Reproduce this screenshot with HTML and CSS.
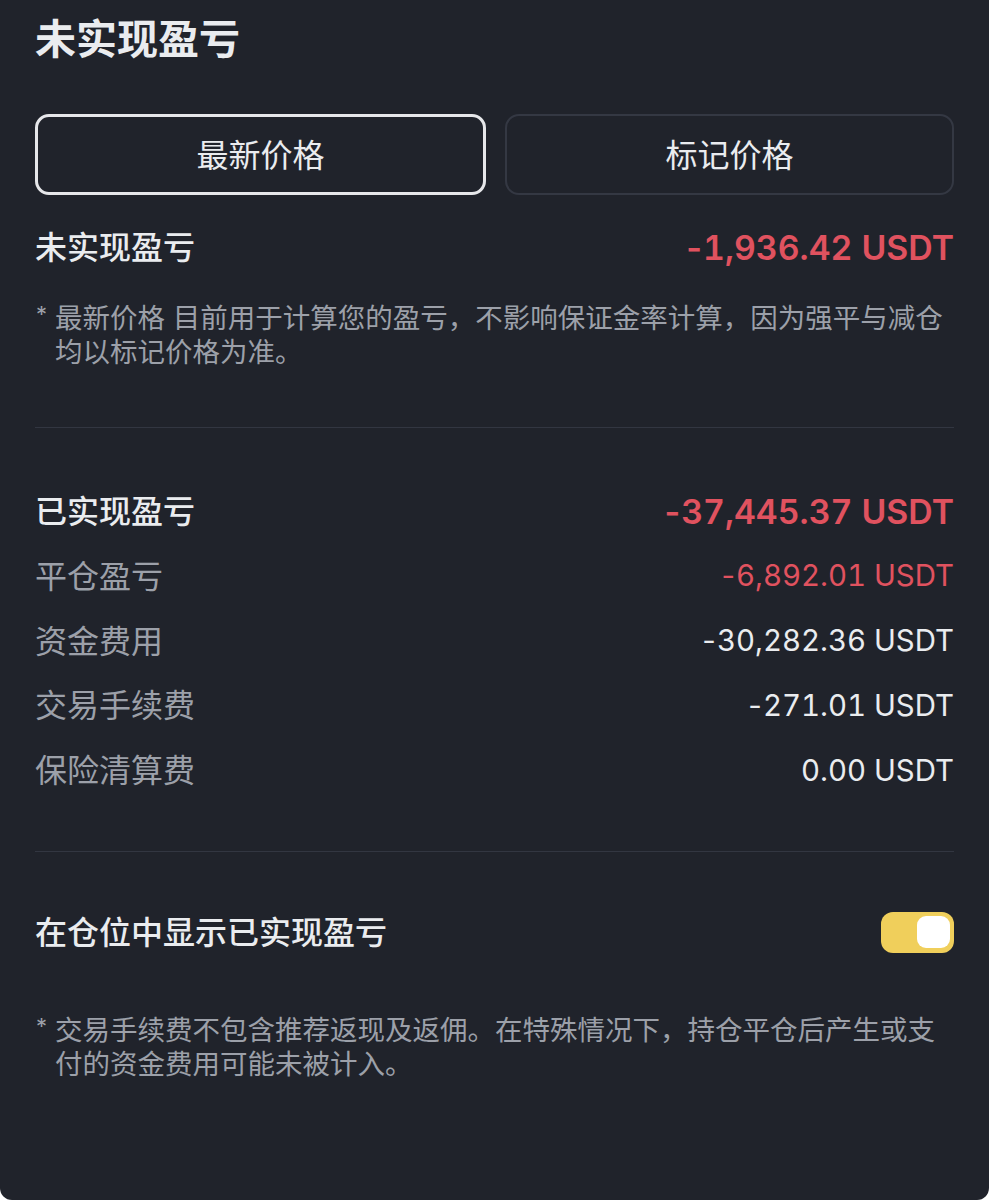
FILE: index.html
```html
<!DOCTYPE html>
<html lang="zh-CN">
<head>
    <meta charset="UTF-8">
    <title>未实现盈亏</title>
    <link rel="stylesheet" href="styles.css">
</head>
<body>
<div class="panel">
    <h1 class="title">未实现盈亏</h1>

    <div class="tabs">
        <div class="tab active">最新价格</div>
        <div class="tab">标记价格</div>
    </div>

    <div class="row main">
        <span class="label">未实现盈亏</span>
        <span class="value red"><b class="sign">-</b>1,936.42 USDT</span>
    </div>
    <div class="note">
        <span class="star">*</span>
        <p>最新价格 目前用于计算您的盈亏，不影响保证金率计算，因为强平与减仓均以标记价格为准。</p>
    </div>

    <div class="line line-top"></div>

    <div class="list">
        <div class="row main">
            <span class="label">已实现盈亏</span>
            <span class="value red"><b class="sign">-</b>37,445.37 USDT</span>
        </div>
        <div class="row">
            <span class="label">平仓盈亏</span>
            <span class="value red"><b class="sign">-</b>6,892.01 USDT</span>
        </div>
        <div class="row">
            <span class="label">资金费用</span>
            <span class="value"><b class="sign">-</b>30,282.36 USDT</span>
        </div>
        <div class="row">
            <span class="label">交易手续费</span>
            <span class="value"><b class="sign">-</b>271.01 USDT</span>
        </div>
        <div class="row">
            <span class="label">保险清算费</span>
            <span class="value">0.00 USDT</span>
        </div>
    </div>

    <div class="line"></div>

    <div class="row main switch-row">
        <span class="label">在仓位中显示已实现盈亏</span>
        <span class="switch on"><i></i></span>
    </div>
    <div class="note">
        <span class="star">*</span>
        <p>交易手续费不包含推荐返现及返佣。在特殊情况下，持仓平仓后产生或支付的资金费用可能未被计入。</p>
    </div>
</div>
</body>
</html>
```

FILE: styles.css
```css
* {
    margin: 0;
    padding: 0;
    box-sizing: border-box;
}

body {
    background: #fff;
    font-family: Inter, "Noto Sans CJK SC", sans-serif;
}

.panel {
    background: #20232b;
    height: 1200px;
    padding: 15px 35px 0 35px;
    border-radius: 0 0 12px 12px;
    color: #eaecef;
}

.title {
    font-size: 41px;
    line-height: 48px;
    font-weight: 700;
    color: #eaecef;
}

.tabs {
    display: flex;
    gap: 19px;
    margin-top: 51px;
}

.tab {
    flex: 1;
    height: 81px;
    border: 2px solid #343843;
    border-radius: 14px;
    display: flex;
    align-items: center;
    justify-content: center;
    font-size: 32px;
    color: #eaecef;
    padding-bottom: 3px;
}

.tab.active {
    border: 3px solid #e6e7ea;
}

.row {
    display: flex;
    justify-content: space-between;
    align-items: center;
    height: 44px;
    font-size: 32px;
}

.tabs + .row {
    margin-top: 30px;
}

.row .label {
    color: #9ca0a9;
    padding-bottom: 4px;
}

.row.main .label {
    color: #eaecef;
    font-weight: 500;
}

.value {
    color: #eaecef;
    font-size: 29.4px;
    font-variant-numeric: tabular-nums;
}

.value .sign {
    font-weight: inherit;
    font-variant-numeric: normal;
    margin-right: 1px;
}

.value.red {
    color: #e0525f;
}

.main .value {
    font-size: 33.8px;
    font-weight: 600;
}

.note {
    display: flex;
    margin-top: 32px;
    color: #9ca0a9;
    font-size: 27.5px;
    line-height: 34px;
}

.note .star {
    width: 20px;
    flex: none;
    font-size: 22px;
    line-height: 26px;
    padding-left: 1px;
}

.line {
    height: 1px;
    background: #323641;
    margin-top: 59px;
}

.line-top {
    margin-top: 58px;
}

.list {
    display: flex;
    flex-direction: column;
    gap: 20.75px;
    margin-top: 61px;
}

.switch-row {
    margin-top: 58px;
}

.switch-row + .note {
    margin-top: 59px;
}

.switch {
    display: flex;
    justify-content: flex-end;
    align-items: center;
    width: 73px;
    height: 41px;
    border-radius: 12px;
    background: #f0cf5b;
    padding-right: 4px;
}

.switch i {
    display: block;
    width: 33px;
    height: 32px;
    border-radius: 9px;
    background: #fff;
}
```
